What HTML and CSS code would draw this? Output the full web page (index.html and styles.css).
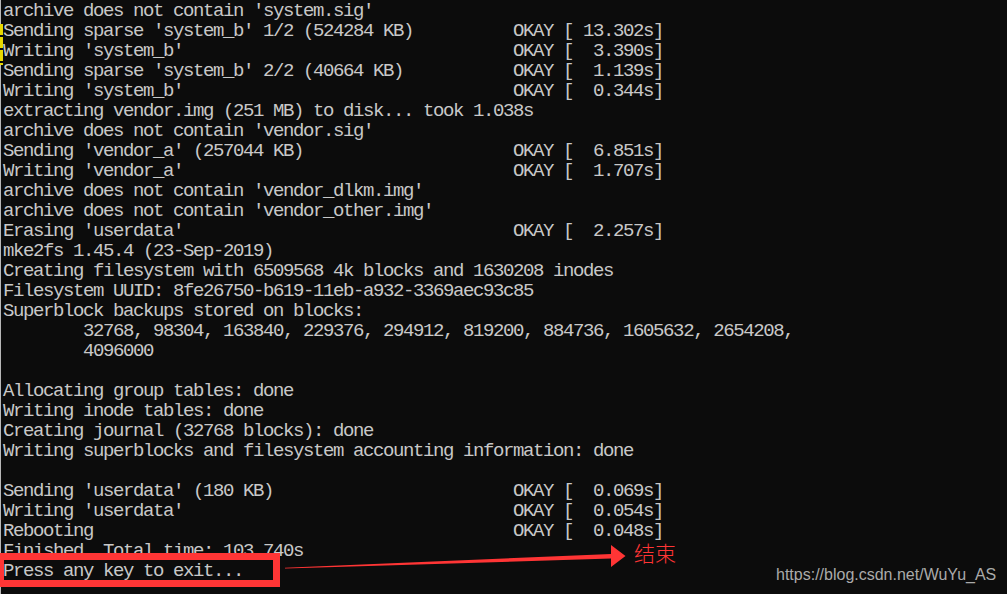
FILE: index.html
```html
<!DOCTYPE html>
<html>
<head>
<meta charset="utf-8">
<link rel="stylesheet" href="styles.css">
</head>
<body>
<div class="screen">
  <div class="term">
    <div class="row">archive does not contain 'system.sig'</div>
    <div class="row"><span class="msg">Sending sparse 'system_b' 1/2 (524284 KB)</span><span>OKAY [ 13.302s]</span></div>
    <div class="row"><span class="msg">Writing 'system_b'</span><span>OKAY [  3.390s]</span></div>
    <div class="row"><span class="msg">Sending sparse 'system_b' 2/2 (40664 KB)</span><span>OKAY [  1.139s]</span></div>
    <div class="row"><span class="msg">Writing 'system_b'</span><span>OKAY [  0.344s]</span></div>
    <div class="row">extracting vendor.img (251 MB) to disk... took 1.038s</div>
    <div class="row">archive does not contain 'vendor.sig'</div>
    <div class="row"><span class="msg">Sending 'vendor_a' (257044 KB)</span><span>OKAY [  6.851s]</span></div>
    <div class="row"><span class="msg">Writing 'vendor_a'</span><span>OKAY [  1.707s]</span></div>
    <div class="row">archive does not contain 'vendor_dlkm.img'</div>
    <div class="row">archive does not contain 'vendor_other.img'</div>
    <div class="row"><span class="msg">Erasing 'userdata'</span><span>OKAY [  2.257s]</span></div>
    <div class="row">mke2fs 1.45.4 (23-Sep-2019)</div>
    <div class="row">Creating filesystem with 6509568 4k blocks and 1630208 inodes</div>
    <div class="row">Filesystem UUID: 8fe26750-b619-11eb-a932-3369aec93c85</div>
    <div class="row">Superblock backups stored on blocks:</div>
    <div class="row">        32768, 98304, 163840, 229376, 294912, 819200, 884736, 1605632, 2654208,</div>
    <div class="row">        4096000</div>
    <div class="row"> </div>
    <div class="row">Allocating group tables: done</div>
    <div class="row">Writing inode tables: done</div>
    <div class="row">Creating journal (32768 blocks): done</div>
    <div class="row">Writing superblocks and filesystem accounting information: done</div>
    <div class="row"> </div>
    <div class="row"><span class="msg">Sending 'userdata' (180 KB)</span><span>OKAY [  0.069s]</span></div>
    <div class="row"><span class="msg">Writing 'userdata'</span><span>OKAY [  0.054s]</span></div>
    <div class="row"><span class="msg">Rebooting</span><span>OKAY [  0.048s]</span></div>
    <div class="row">Finished. Total time: 103.740s</div>
    <div class="row">Press any key to exit...</div>
  </div>

  <div class="marker"></div>
  <div class="redbox"></div>
  <svg class="arrow" width="1007" height="594" viewBox="0 0 1007 594">
    <polygon points="285,567.8 611,554 611,545 625.5,556 611,567 611,558.5 285,568.6" fill="#ff3535"/>
  </svg>
  <div class="label">结束</div>
  <div class="watermark">https://blog.csdn.net/WuYu_AS</div>
</div>
</body>
</html>
```
FILE: styles.css
```css
html, body {
  margin: 0;
  padding: 0;
  background: #0c0c0c;
  overflow: hidden;
}

.screen {
  position: relative;
  width: 1007px;
  height: 594px;
  background: #0c0c0c;
  overflow: hidden;
}

.term {
  display: flex;
  flex-direction: column;
  height: 100%;
  box-sizing: border-box;
  padding: 1px 0 0 2px;
  border-left: 1px solid #b8b8b8;
  font-family: "Liberation Mono", monospace;
  font-size: 19px;
  letter-spacing: -1.4px;
  line-height: 20px;
  color: #c8c8c8;
}

.row {
  height: 20px;
  white-space: pre;
}

.msg {
  display: inline-block;
  width: 510px;
}

.marker {
  position: absolute;
  left: 0;
  top: 24px;
  width: 3px;
  height: 41px;
  background: repeating-linear-gradient(to bottom, #e8d800 0, #e8d800 11px, #0c0c0c 11px, #0c0c0c 13px);
}

.redbox {
  position: absolute;
  left: -3px;
  top: 553px;
  width: 283px;
  height: 34px;
  box-sizing: border-box;
  border: 7px solid #ff3535;
}

.arrow {
  position: absolute;
  left: 0;
  top: 0;
}

.label {
  position: absolute;
  left: 634px;
  top: 542px;
  font-family: "Noto Sans CJK SC", sans-serif;
  font-weight: 300;
  font-size: 21px;
  line-height: 20px;
  color: #ff3535;
}

.watermark {
  position: absolute;
  left: 776px;
  top: 566px;
  font-family: "Liberation Sans", Arial, sans-serif;
  font-size: 16px;
  line-height: 18px;
  color: #aaaaaa;
}
```
